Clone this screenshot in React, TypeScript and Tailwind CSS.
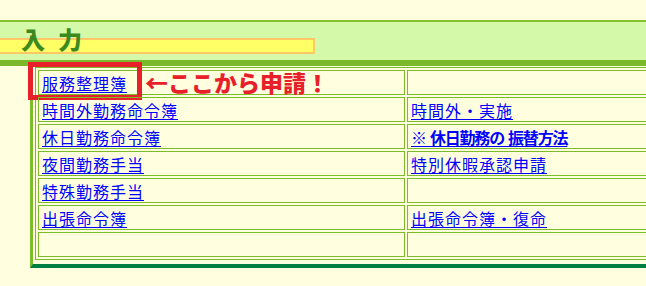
import React from "react";

type Cell = { label?: string; bold?: boolean };

const rows: [Cell, Cell][] = [
  [{ label: "服務整理簿" }, {}],
  [{ label: "時間外勤務命令簿" }, { label: "時間外・実施" }],
  [{ label: "休日勤務命令簿" }, { label: "※\u2004休日勤務の\u2004振替方法", bold: true }],
  [{ label: "夜間勤務手当" }, { label: "特別休暇承認申請" }],
  [{ label: "特殊勤務手当" }, {}],
  [{ label: "出張命令簿" }, { label: "出張命令簿・復命" }],
  [{}, {}],
];

function LinkCell({ cell, first }: { cell: Cell; first?: boolean }) {
  return (
    <td className="relative h-[25px] w-[367px] border border-[#7dbb2a] px-[3px] py-0 align-middle leading-[20px]">
      {cell.label ? (
        <a
          href="#"
          className={
            "text-[16px] text-[#0000ff] underline underline-offset-[2px] " +
            (cell.bold ? "font-bold tracking-[-1.2px]" : "font-normal tracking-[1px]")
          }
        >
          {cell.label}
        </a>
      ) : (
        <span>&nbsp;</span>
      )}
      {first ? (
        <>
          <div className="pointer-events-none absolute left-[-11px] top-[-9px] h-[38px] w-[114px] border-[5px] border-[#e8202a]" />
          <span className="absolute left-[106px] top-[-2px] whitespace-nowrap text-[23px] font-black leading-[26px] text-[#e8202a]">
            ←ここから申請！
          </span>
        </>
      ) : null}
    </td>
  );
}

export default function App() {
  return (
    <div
      className="min-h-[286px] w-full overflow-hidden bg-[#ffffe0]"
      style={{ fontFamily: '"Noto Sans CJK JP", "Noto Sans", sans-serif' }}
    >
      <div className="w-[800px] pt-[20px]">
        {/* heading band */}
        <div className="relative h-[46px] border-t-2 border-b-[6px] border-t-[#85c232] border-b-[#7ab929] bg-[#d4f9a8]">
          <div className="absolute left-0 top-[16px] h-[16px] w-[315px] border-2 border-l-0 border-[#ffc867] bg-[#ffff66]" />
          <h2 className="relative pl-[21px] pt-[4px] text-[24px] font-black leading-[26px] tracking-[13px] text-[#3a8a1e]">
            入力
          </h2>
        </div>

        {/* menu table */}
        <div className="ml-[30px] border-b-4 border-l-[3px] border-b-[#008040] border-l-[#7dbb2a] pb-[4px] pl-[2px] pt-px">
          <table className="border-separate border-spacing-[2px] border border-[#7dbb2a]">
            <tbody>
              {rows.map(([a, b], i) => (
                <tr key={i}>
                  <LinkCell cell={a} first={i === 0} />
                  <LinkCell cell={b} />
                </tr>
              ))}
            </tbody>
          </table>
        </div>
      </div>
    </div>
  );
}
